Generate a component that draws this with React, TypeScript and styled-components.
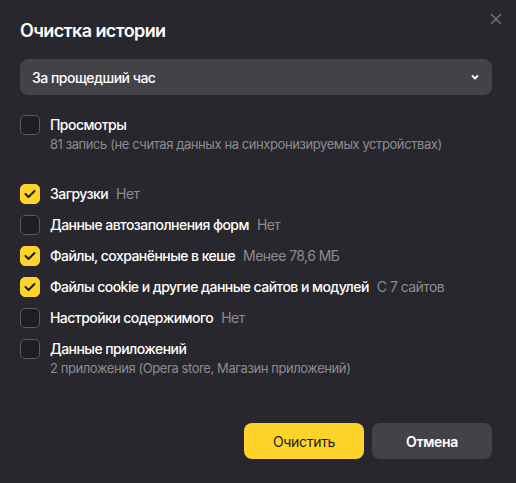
import React, { useState } from 'react';
import styled, { createGlobalStyle } from 'styled-components';

const GlobalStyle = createGlobalStyle`
  html, body {
    margin: 0;
    padding: 0;
    background: #28272d;
  }
  body {
    font-family: Inter, "Noto Sans", sans-serif;
    -webkit-font-smoothing: antialiased;
  }
`;

const Dialog = styled.div`
  position: relative;
  box-sizing: border-box;
  width: 516px;
  height: 483px;
  background: #28272d;
  padding: 19px 24px 24px 20px;
  display: flex;
  flex-direction: column;
`;

const Title = styled.h1`
  margin: 0;
  color: #ffffff;
  font-size: 18px;
  font-weight: 600;
  line-height: 24px;
  letter-spacing: -0.6px;
`;

const CloseButton = styled.button`
  position: absolute;
  top: 12px;
  right: 13px;
  width: 14px;
  height: 14px;
  padding: 0;
  border: 0;
  background: none;
  display: flex;
  align-items: center;
  justify-content: center;
  cursor: pointer;
`;

const Select = styled.div`
  margin-top: 16px;
  height: 36px;
  border-radius: 8px;
  background: #434247;
  display: flex;
  align-items: center;
  justify-content: space-between;
  padding: 0 13px 0 12px;
  color: #ffffff;
  font-size: 14px;
  font-weight: 500;
  letter-spacing: -0.5px;
`;

const List = styled.div`
  margin-top: 20px;
  display: flex;
  flex-direction: column;
`;

const Row = styled.label<{ $gap?: number }>`
  display: flex;
  align-items: flex-start;
  gap: 10px;
  min-height: 20px;
  margin-bottom: ${p => p.$gap ?? 11}px;
  cursor: pointer;
`;

const Box = styled.span<{ $checked: boolean }>`
  flex: none;
  box-sizing: border-box;
  width: 20px;
  height: 20px;
  border-radius: 5px;
  background: ${p => (p.$checked ? '#fed42b' : '#1f1e23')};
  border: 1px solid ${p => (p.$checked ? '#fed42b' : '#5b5a60')};
  display: flex;
  align-items: center;
  justify-content: center;
`;

const Texts = styled.div`
  display: flex;
  flex-direction: column;
`;

const Label = styled.div`
  color: #ffffff;
  font-size: 14px;
  font-weight: 500;
  line-height: 20px;
  letter-spacing: -0.55px;
`;

const Note = styled.span`
  margin-left: 8px;
  color: #8c8b91;
  font-weight: 400;
`;

const Sub = styled.div`
  color: #8c8b91;
  font-size: 13px;
  line-height: 18px;
  letter-spacing: -0.42px;
`;

const Footer = styled.div`
  margin-top: auto;
  display: flex;
  justify-content: flex-end;
  gap: 8px;
`;

const Button = styled.button<{ $primary?: boolean }>`
  width: 120px;
  height: 36px;
  border: 0;
  border-radius: 8px;
  font-family: inherit;
  font-size: 14px;
  letter-spacing: -0.3px;
  font-weight: ${p => (p.$primary ? 400 : 600)};
  background: ${p => (p.$primary ? '#fed42b' : '#434247')};
  color: ${p => (p.$primary ? '#1a1a1a' : '#ffffff')};
  cursor: pointer;
`;

type Item = { label: string; note?: string; sub?: string; checked: boolean; gap?: number };

const initial: Item[] = [
  { label: 'Просмотры', sub: '81 запись (не считая данных на синхронизируемых устройствах)', checked: false, gap: 31 },
  { label: 'Загрузки', note: 'Нет', checked: true },
  { label: 'Данные автозаполнения форм', note: 'Нет', checked: false },
  { label: 'Файлы, сохранённые в кеше', note: 'Менее 78,6 МБ', checked: true },
  { label: 'Файлы cookie и другие данные сайтов и модулей', note: 'С 7 сайтов', checked: true },
  { label: 'Настройки содержимого', note: 'Нет', checked: false },
  { label: 'Данные приложений', sub: '2 приложения (Opera store, Магазин приложений)', checked: false, gap: 0 },
];

const Check = () => (
  <svg width="12" height="10" viewBox="0 0 12 10">
    <path d="M1.5 5 L4.5 8 L10.5 2" fill="none" stroke="#1a1a1a" strokeWidth="2" strokeLinecap="round" strokeLinejoin="round" />
  </svg>
);

const App: React.FC = () => {
  const [items, setItems] = useState<Item[]>(initial);

  const toggle = (index: number) => {
    setItems(items.map((it, i) => (i === index ? { ...it, checked: !it.checked } : it)));
  };

  return (
    <>
      <GlobalStyle />
      <Dialog>
        <Title>Очистка истории</Title>
        <CloseButton aria-label="Закрыть">
          <svg width="12" height="12" viewBox="0 0 12 12">
            <path d="M1 1 L11 11 M11 1 L1 11" stroke="#7c7b81" strokeWidth="1.3" />
          </svg>
        </CloseButton>
        <Select>
          <span>За прощедший час</span>
          <svg width="8" height="6" viewBox="0 0 8 6">
            <path d="M1 1.5 L4 4.5 L7 1.5" fill="none" stroke="#ffffff" strokeWidth="1.8" />
          </svg>
        </Select>
        <List>
          {items.map((item, index) => (
            <Row key={index} $gap={item.gap} onClick={() => toggle(index)}>
              <Box $checked={item.checked}>{item.checked && <Check />}</Box>
              <Texts>
                <Label>
                  {item.label}
                  {item.note && <Note>{item.note}</Note>}
                </Label>
                {item.sub && <Sub>{item.sub}</Sub>}
              </Texts>
            </Row>
          ))}
        </List>
        <Footer>
          <Button $primary>Очистить</Button>
          <Button>Отмена</Button>
        </Footer>
      </Dialog>
    </>
  );
};

export default App;
